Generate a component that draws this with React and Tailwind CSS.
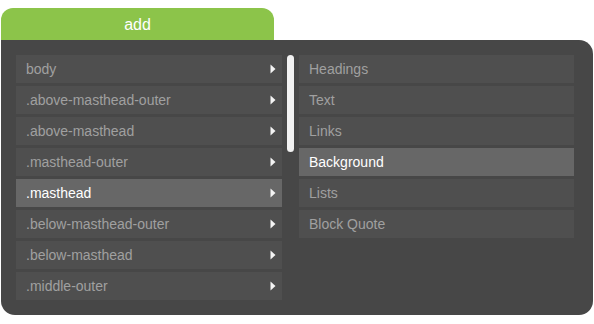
const LEFT = [
  'body',
  '.above-masthead-outer',
  '.above-masthead',
  '.masthead-outer',
  '.masthead',
  '.below-masthead-outer',
  '.below-masthead',
  '.middle-outer',
];

const RIGHT = ['Headings', 'Text', 'Links', 'Background', 'Lists', 'Block Quote'];

function Arrow() {
  return (
    <svg className="w-[6px] h-[10px] shrink-0" viewBox="0 0 6 10">
      <path d="M0.5 0.5 L5.5 5 L0.5 9.5 Z" fill="#f4f4f4" />
    </svg>
  );
}

export default function App() {
  return (
    <div className="w-[594px] h-[324px] bg-white pt-2 pl-px font-['Liberation_Sans',Arial,sans-serif]">
      {/* Tab */}
      <div className="w-[273px] h-8 rounded-t-[12px] bg-[#8cc44a] flex items-center justify-center pt-[2px] text-white text-[16px]">
        add
      </div>

      {/* Panel */}
      <div className="w-[592px] h-[275px] bg-[#474747] rounded-tr-[14px] rounded-b-[14px] pt-[15px] pl-[15px] flex">
        {/* Left list */}
        <div className="w-[266px] flex flex-col gap-[3px]">
          {LEFT.map(item => {
            const sel = item === '.masthead';
            return (
              <div
                key={item}
                className={`h-7 flex items-center justify-between pl-[10px] pr-[6px] text-[14px] ${
                  sel ? 'bg-[#676767] text-white' : 'bg-[#4f4f4f] text-[#a0a0a0]'
                }`}
              >
                <span className="pt-px">{item}</span>
                <Arrow />
              </div>
            );
          })}
        </div>

        {/* Scrollbar */}
        <div className="ml-[5px] w-[7px] h-[97px] rounded-full bg-[#f2f2f2]" />

        {/* Right list */}
        <div className="ml-[5px] w-[275px] flex flex-col gap-[3px]">
          {RIGHT.map(item => {
            const sel = item === 'Background';
            return (
              <div
                key={item}
                className={`h-7 flex items-center pl-[10px] text-[14px] ${
                  sel ? 'bg-[#676767] text-white' : 'bg-[#4f4f4f] text-[#a0a0a0]'
                }`}
              >
                <span className="pt-px">{item}</span>
              </div>
            );
          })}
        </div>
      </div>
    </div>
  );
}
